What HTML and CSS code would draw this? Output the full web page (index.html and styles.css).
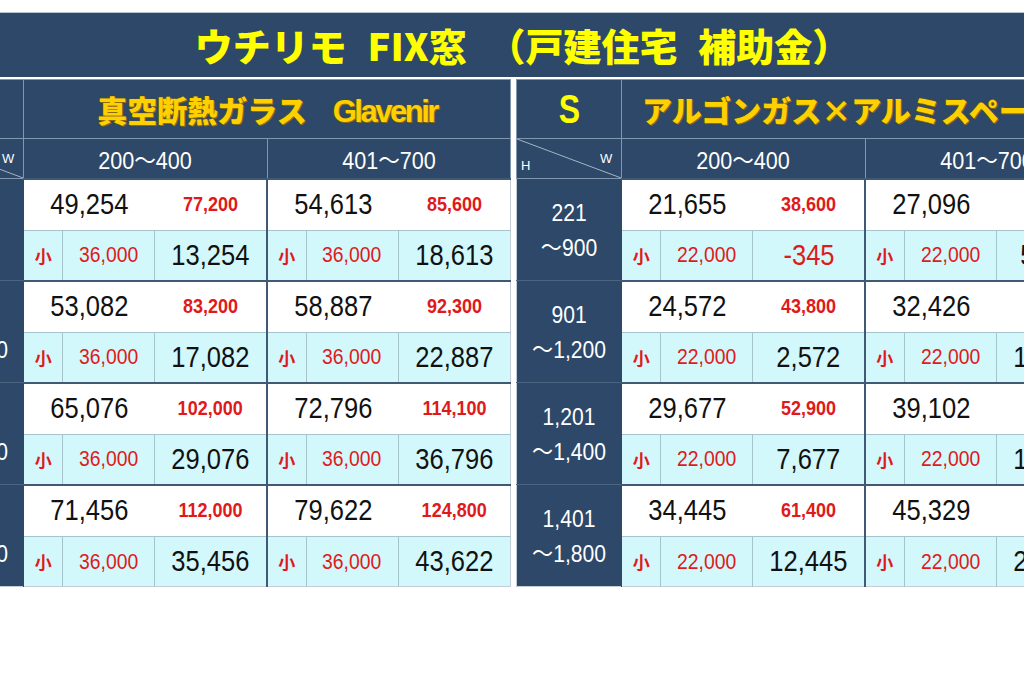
FILE: index.html
```html
<!DOCTYPE html>
<html lang="ja">
<head>
<meta charset="utf-8">
<title>ウチリモ FIX窓 （戸建住宅 補助金）</title>
<link rel="stylesheet" href="styles.css">
</head>
<body>
<div class="sheet">
  <header class="title"><h1>ウチリモ FIX窓 （戸建住宅 補助金）</h1></header>
  <div class="tables">
    <table class="price">
      <colgroup><col class="c-h"><col class="c-s"><col class="c-a"><col class="c-t"><col class="c-s"><col class="c-a"><col class="c-t"></colgroup>
      <thead>
        <tr class="r-prod"><th class="grade"><span class="n">G</span></th><th colspan="6" class="prod">真空断熱ガラス<span class="latin">Glavenir</span></th></tr>
        <tr class="r-width">
          <th class="hw"><svg class="diag" viewBox="0 0 100 100" preserveAspectRatio="none"><line x1="0" y1="0" x2="100" y2="100" vector-effect="non-scaling-stroke"/></svg><span class="w">W</span><span class="h">H</span></th>
          <th colspan="3"><span class="n">200～400</span></th>
          <th colspan="3" class="grp"><span class="n">401～700</span></th>
        </tr>
      </thead>
      <tbody>
        <tr class="r-top"><th rowspan="2" class="hlabel"><span class="n">221</span><br><span class="n">～900</span></th><td colspan="2" class="main"><span class="n">49,254</span></td><td class="list"><span class="n">77,200</span></td><td colspan="2" class="main grp"><span class="n">54,613</span></td><td class="list"><span class="n">85,600</span></td></tr>
        <tr class="r-sub"><td class="small">小</td><td class="grant"><span class="n">36,000</span></td><td class="net"><span class="n">13,254</span></td><td class="small grp">小</td><td class="grant"><span class="n">36,000</span></td><td class="net"><span class="n">18,613</span></td></tr>
        <tr class="r-top"><th rowspan="2" class="hlabel"><span class="n">901</span><br><span class="n">～1,200</span></th><td colspan="2" class="main"><span class="n">53,082</span></td><td class="list"><span class="n">83,200</span></td><td colspan="2" class="main grp"><span class="n">58,887</span></td><td class="list"><span class="n">92,300</span></td></tr>
        <tr class="r-sub"><td class="small">小</td><td class="grant"><span class="n">36,000</span></td><td class="net"><span class="n">17,082</span></td><td class="small grp">小</td><td class="grant"><span class="n">36,000</span></td><td class="net"><span class="n">22,887</span></td></tr>
        <tr class="r-top"><th rowspan="2" class="hlabel"><span class="n">1,201</span><br><span class="n">～1,400</span></th><td colspan="2" class="main"><span class="n">65,076</span></td><td class="list"><span class="n">102,000</span></td><td colspan="2" class="main grp"><span class="n">72,796</span></td><td class="list"><span class="n">114,100</span></td></tr>
        <tr class="r-sub"><td class="small">小</td><td class="grant"><span class="n">36,000</span></td><td class="net"><span class="n">29,076</span></td><td class="small grp">小</td><td class="grant"><span class="n">36,000</span></td><td class="net"><span class="n">36,796</span></td></tr>
        <tr class="r-top"><th rowspan="2" class="hlabel"><span class="n">1,401</span><br><span class="n">～1,800</span></th><td colspan="2" class="main"><span class="n">71,456</span></td><td class="list"><span class="n">112,000</span></td><td colspan="2" class="main grp"><span class="n">79,622</span></td><td class="list"><span class="n">124,800</span></td></tr>
        <tr class="r-sub"><td class="small">小</td><td class="grant"><span class="n">36,000</span></td><td class="net"><span class="n">35,456</span></td><td class="small grp">小</td><td class="grant"><span class="n">36,000</span></td><td class="net"><span class="n">43,622</span></td></tr>
      </tbody>
    </table>

    <table class="price">
      <colgroup><col class="c-h"><col class="c-s"><col class="c-a"><col class="c-t"><col class="c-s"><col class="c-a"><col class="c-t"></colgroup>
      <thead>
        <tr class="r-prod"><th class="grade"><span class="n">S</span></th><th colspan="6" class="prod">アルゴンガス×アルミスペーサー</th></tr>
        <tr class="r-width">
          <th class="hw"><svg class="diag" viewBox="0 0 100 100" preserveAspectRatio="none"><line x1="0" y1="0" x2="100" y2="100" vector-effect="non-scaling-stroke"/></svg><span class="w">W</span><span class="h">H</span></th>
          <th colspan="3"><span class="n">200～400</span></th>
          <th colspan="3" class="grp"><span class="n">401～700</span></th>
        </tr>
      </thead>
      <tbody>
        <tr class="r-top"><th rowspan="2" class="hlabel"><span class="n">221</span><br><span class="n">～900</span></th><td colspan="2" class="main"><span class="n">21,655</span></td><td class="list"><span class="n">38,600</span></td><td colspan="2" class="main grp"><span class="n">27,096</span></td><td class="list"><span class="n">48,300</span></td></tr>
        <tr class="r-sub"><td class="small">小</td><td class="grant"><span class="n">22,000</span></td><td class="net neg"><span class="n">-345</span></td><td class="small grp">小</td><td class="grant"><span class="n">22,000</span></td><td class="net"><span class="n">5,096</span></td></tr>
        <tr class="r-top"><th rowspan="2" class="hlabel"><span class="n">901</span><br><span class="n">～1,200</span></th><td colspan="2" class="main"><span class="n">24,572</span></td><td class="list"><span class="n">43,800</span></td><td colspan="2" class="main grp"><span class="n">32,426</span></td><td class="list"><span class="n">57,800</span></td></tr>
        <tr class="r-sub"><td class="small">小</td><td class="grant"><span class="n">22,000</span></td><td class="net"><span class="n">2,572</span></td><td class="small grp">小</td><td class="grant"><span class="n">22,000</span></td><td class="net"><span class="n">10,426</span></td></tr>
        <tr class="r-top"><th rowspan="2" class="hlabel"><span class="n">1,201</span><br><span class="n">～1,400</span></th><td colspan="2" class="main"><span class="n">29,677</span></td><td class="list"><span class="n">52,900</span></td><td colspan="2" class="main grp"><span class="n">39,102</span></td><td class="list"><span class="n">69,700</span></td></tr>
        <tr class="r-sub"><td class="small">小</td><td class="grant"><span class="n">22,000</span></td><td class="net"><span class="n">7,677</span></td><td class="small grp">小</td><td class="grant"><span class="n">22,000</span></td><td class="net"><span class="n">17,102</span></td></tr>
        <tr class="r-top"><th rowspan="2" class="hlabel"><span class="n">1,401</span><br><span class="n">～1,800</span></th><td colspan="2" class="main"><span class="n">34,445</span></td><td class="list"><span class="n">61,400</span></td><td colspan="2" class="main grp"><span class="n">45,329</span></td><td class="list"><span class="n">80,800</span></td></tr>
        <tr class="r-sub"><td class="small">小</td><td class="grant"><span class="n">22,000</span></td><td class="net"><span class="n">12,445</span></td><td class="small grp">小</td><td class="grant"><span class="n">22,000</span></td><td class="net"><span class="n">23,329</span></td></tr>
      </tbody>
    </table>
  </div>
</div>
</body>
</html>
```
FILE: styles.css
```css
* { box-sizing: border-box; }
html, body { margin: 0; padding: 0; background: #fff; }
body {
  width: 1024px;
  height: 683px;
  overflow: hidden;
  font-family: "Liberation Sans", "Noto Sans CJK JP", sans-serif;
}
.sheet {
  width: 1191px;
  margin-left: -82px;
  padding-top: 12px;
}
.title {
  height: 65px;
  background: #2d4868;
  border-top: 1px solid #b7c3cf;
  display: flex;
  align-items: center;
  justify-content: center;
  padding-left: 18px;
}
.title h1 {
  margin: 0;
  font-family: "Noto Sans CJK JP", sans-serif;
  font-weight: 900;
  font-size: 38px;
  line-height: 1;
  color: #ffff00;
  word-spacing: 12px;
}
.tables {
  display: flex;
  gap: 5px;
  margin-top: 2px;
  align-items: flex-start;
}
.price {
  width: 593px;
  table-layout: fixed;
  border-collapse: collapse;
  border: 1px solid #c5ced8;
  flex: none;
}
.c-h { width: 105px; }
.c-s { width: 39px; }
.c-a { width: 92px; }
.c-t { width: 112px; }

.price th, .price td {
  padding: 0;
  text-align: center;
  vertical-align: middle;
  white-space: nowrap;
  overflow: hidden;
}
.n { display: inline-block; }

/* header */
.price thead th {
  background: #2d4868;
  color: #fff;
  font-weight: normal;
  border: 1px solid #8097ae;
}
.r-prod th { height: 59px; }
.r-width th { height: 40px; font-size: 24px; }
.r-width th .n { transform: scaleX(0.9); }
.price thead th.grade {
  font-size: 40px;
  font-weight: 700;
  color: #ffff00;
}
.grade .n { transform: scaleX(0.8); }
.price thead th.prod {
  font-family: "Noto Sans CJK JP", sans-serif;
  font-weight: 900;
  font-size: 30px;
  color: #ffd000;
  text-shadow: 1px 1px 0 #8a6a14, 0 0 2px #6b5210;
}
.prod .latin {
  font-family: "Liberation Sans", sans-serif;
  font-weight: 700;
  font-size: 31px;
  letter-spacing: -2.5px;
  margin-left: 26px;
}
.hw { position: relative; }
.diag {
  position: absolute;
  left: 0;
  top: 0;
  width: 100%;
  height: 100%;
}
.diag line { stroke: #a3b5c8; stroke-width: 1; }
.hw .w, .hw .h {
  position: absolute;
  font-size: 13px;
  color: #fff;
  line-height: 1;
}
.hw .w { right: 9px; top: 13px; }
.hw .h { left: 4px; bottom: 6px; }

/* body */
.hlabel {
  background: #2d4868;
  color: #fff;
  font-weight: normal;
  font-size: 24px;
  line-height: 35px;
  border-top: 1px solid #4b647f;
  border-right: 1px solid #2d4868;
}
.hlabel .n { transform: scaleX(0.88); }
.r-top td {
  background: #fff;
  height: 52px;
  border-top: 2px solid #405a75;
}
.r-sub td {
  background: #d3f8fc;
  height: 50px;
  border-top: 1px solid #a6c4cc;
  border-left: 1px solid #a6c4cc;
}
.price td.grp, .price th.grp { border-left: 2px solid #405a75; }
.price thead th.grp { border-left: 1px solid #c0ccd8; }

.main { font-size: 29px; color: #111; }
.main .n { transform: scaleX(0.88); }
.net { font-size: 29px; color: #111; }
.net .n { transform: scaleX(0.88); }
.net.neg { color: #e01a1a; }
.list { font-size: 20px; font-weight: 700; color: #e01a1a; }
.list .n { transform: scaleX(0.9); }
.grant { font-size: 22px; color: #e01a1a; }
.grant .n { transform: scaleX(0.88); }
.small {
  font-family: "Noto Sans CJK JP", sans-serif;
  font-size: 17px;
  font-weight: 700;
  color: #e01a1a;
}
```
